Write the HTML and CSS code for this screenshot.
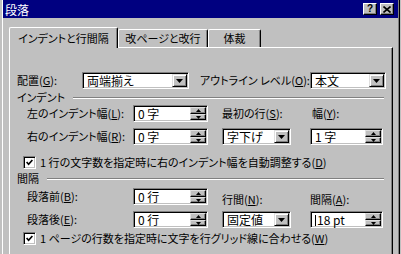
FILE: index.html
```html
<!DOCTYPE html>
<html lang="ja">
<head>
  <meta charset="UTF-8">
  <title>段落</title>
  <link rel="stylesheet" href="styles.css">
</head>
<body>
  <div class="window">
    <div class="titlebar">
      <span class="title">段落</span>
      <span class="caption-btns">
        <span class="cbtn help">?</span>
        <span class="cbtn">
          <svg width="8" height="7" viewBox="0 0 8 7"><path d="M0.5 0.5 L7.5 6.5 M7.5 0.5 L0.5 6.5" stroke="#000" stroke-width="1.6"/></svg>
        </span>
      </span>
    </div>

    <div class="tabs">
      <div class="tab active" style="width: 109px;">インデントと行間隔</div>
      <div class="tab" style="width: 90px;">改ページと改行</div>
      <div class="tab" style="width: 53px;">体裁</div>
    </div>

    <div class="panel">
      <!-- 配置 / アウトライン レベル -->
      <div class="row-top">
        <span class="lbl-align">配置(<u>G</u>):</span>
        <div class="combo w-align">
          <span class="value">両端揃え</span>
          <span class="arrow"><svg width="7" height="4" viewBox="0 0 7 4"><polygon points="0,0 7,0 3.5,4" fill="#000"/></svg></span>
        </div>
        <span class="lbl-outline">アウトライン レベル(<u>O</u>):</span>
        <div class="combo w-outline">
          <span class="value">本文</span>
          <span class="arrow"><svg width="7" height="4" viewBox="0 0 7 4"><polygon points="0,0 7,0 3.5,4" fill="#000"/></svg></span>
        </div>
      </div>

      <!-- インデント -->
      <div class="group-head">
        <span>インデント</span>
        <span class="etch"></span>
      </div>
      <div class="fields">
        <span>左のインデント幅(<u>L</u>):</span>
        <div class="spin w-left">
          <span class="value">0 字</span>
          <span class="spin-btns">
            <span class="sbtn up"><svg width="5" height="3" viewBox="0 0 5 3"><polygon points="2.5,0 5,3 0,3" fill="#000"/></svg></span>
            <span class="sbtn"><svg width="5" height="3" viewBox="0 0 5 3"><polygon points="0,0 5,0 2.5,3" fill="#000"/></svg></span>
          </span>
        </div>
        <span>最初の行(<u>S</u>):</span>
        <span class="lbl-shift">幅(<u>Y</u>):</span>

        <span>右のインデント幅(<u>R</u>):</span>
        <div class="spin w-left">
          <span class="value">0 字</span>
          <span class="spin-btns">
            <span class="sbtn up"><svg width="5" height="3" viewBox="0 0 5 3"><polygon points="2.5,0 5,3 0,3" fill="#000"/></svg></span>
            <span class="sbtn"><svg width="5" height="3" viewBox="0 0 5 3"><polygon points="0,0 5,0 2.5,3" fill="#000"/></svg></span>
          </span>
        </div>
        <div class="combo w-mid">
          <span class="value">字下げ</span>
          <span class="arrow"><svg width="7" height="4" viewBox="0 0 7 4"><polygon points="0,0 7,0 3.5,4" fill="#000"/></svg></span>
        </div>
        <div class="spin w-right">
          <span class="value">1 字</span>
          <span class="spin-btns">
            <span class="sbtn up"><svg width="5" height="3" viewBox="0 0 5 3"><polygon points="2.5,0 5,3 0,3" fill="#000"/></svg></span>
            <span class="sbtn"><svg width="5" height="3" viewBox="0 0 5 3"><polygon points="0,0 5,0 2.5,3" fill="#000"/></svg></span>
          </span>
        </div>
      </div>

      <div class="check-row first">
        <span class="check"><svg width="7" height="7" viewBox="0 0 7 7"><polyline points="0.6,3 2.6,5.2 6.4,1" fill="none" stroke="#000" stroke-width="1.7"/></svg></span>
        <span>1 行の文字数を指定時に右のインデント幅を自動調整する(<u>D</u>)</span>
      </div>

      <!-- 間隔 -->
      <div class="group-head second">
        <span>間隔</span>
        <span class="etch"></span>
      </div>
      <div class="fields spacing">
        <span>段落前(<u>B</u>):</span>
        <div class="spin w-left">
          <span class="value">0 行</span>
          <span class="spin-btns">
            <span class="sbtn up"><svg width="5" height="3" viewBox="0 0 5 3"><polygon points="2.5,0 5,3 0,3" fill="#000"/></svg></span>
            <span class="sbtn"><svg width="5" height="3" viewBox="0 0 5 3"><polygon points="0,0 5,0 2.5,3" fill="#000"/></svg></span>
          </span>
        </div>
        <span class="lbl-low">行間(<u>N</u>):</span>
        <span class="lbl-low">間隔(<u>A</u>):</span>

        <span>段落後(<u>E</u>):</span>
        <div class="spin w-left">
          <span class="value">0 行</span>
          <span class="spin-btns">
            <span class="sbtn up"><svg width="5" height="3" viewBox="0 0 5 3"><polygon points="2.5,0 5,3 0,3" fill="#000"/></svg></span>
            <span class="sbtn"><svg width="5" height="3" viewBox="0 0 5 3"><polygon points="0,0 5,0 2.5,3" fill="#000"/></svg></span>
          </span>
        </div>
        <div class="combo w-mid">
          <span class="value">固定値</span>
          <span class="arrow"><svg width="7" height="4" viewBox="0 0 7 4"><polygon points="0,0 7,0 3.5,4" fill="#000"/></svg></span>
        </div>
        <div class="spin w-right">
          <span class="value"><span class="caret"></span>18 pt</span>
          <span class="spin-btns">
            <span class="sbtn up"><svg width="5" height="3" viewBox="0 0 5 3"><polygon points="2.5,0 5,3 0,3" fill="#000"/></svg></span>
            <span class="sbtn"><svg width="5" height="3" viewBox="0 0 5 3"><polygon points="0,0 5,0 2.5,3" fill="#000"/></svg></span>
          </span>
        </div>
      </div>

      <div class="check-row last">
        <span class="check"><svg width="7" height="7" viewBox="0 0 7 7"><polyline points="0.6,3 2.6,5.2 6.4,1" fill="none" stroke="#000" stroke-width="1.7"/></svg></span>
        <span>1 ページの行数を指定時に文字を行グリッド線に合わせる(<u>W</u>)</span>
      </div>
    </div>
  </div>
</body>
</html>
```

FILE: styles.css
```css
body {
  margin: 0;
  background-color: #c0c0c0;
  font-family: "Noto Sans CJK JP", "Noto Sans", sans-serif;
  font-size: 11px;
  line-height: 13px;
  color: #000;
  font-feature-settings: "palt";
}

u {
  text-decoration: underline;
  text-underline-offset: 1px;
}

.window {
  width: 401px;
  height: 254px;
  box-sizing: border-box;
  padding: 0 3px;
  overflow: hidden;
  background-color: #c0c0c0;
  /* рамка окна */
  box-shadow: inset 2px 0 #c0c0c0, inset 3px 0 #fff,
    inset -1px 0 #c0c0c0, inset -2px 0 #000, inset -3px 0 #808080;
}

.titlebar {
  height: 18px;
  display: flex;
  align-items: center;
  padding: 0 4px 0 2px;
  background-color: #000080;
  color: #fff;
}

.title {
  font-size: 12px;
}

.caption-btns {
  margin-left: auto;
  display: flex;
  gap: 3px;
}

.cbtn {
  width: 14px;
  height: 12px;
  box-sizing: border-box;
  display: flex;
  align-items: center;
  justify-content: center;
  background-color: #c0c0c0;
  border: 1px solid;
  border-color: #fff #000 #000 #fff;
  box-shadow: inset -1px -1px #808080;
}

.help {
  font-family: "Liberation Sans", Arial, sans-serif;
  font-weight: bold;
  font-size: 10px;
  color: #000;
  line-height: 10px;
}

/* вкладки */
.tabs {
  height: 20px;
  margin: 9px 0 0 6px;
  display: flex;
  align-items: flex-end;
}

.tab {
  height: 18px;
  box-sizing: border-box;
  display: flex;
  align-items: center;
  justify-content: center;
  white-space: nowrap;
  border-top: 1px solid #fff;
  border-left: 1px solid #fff;
  border-right: 1px solid #000;
  border-top-left-radius: 2px;
  border-top-right-radius: 2px;
  box-shadow: inset -1px 0 #808080;
}

.tab.active {
  height: 21px;
  margin-bottom: -1px;
  position: relative;
  z-index: 1;
  background-color: #c0c0c0;
}

.panel {
  width: 384px;
  height: 220px;
  box-sizing: border-box;
  margin-left: 6px;
  padding-top: 24px;
  border-top: 1px solid #fff;
  border-left: 1px solid #fff;
  border-right: 1px solid #000;
  box-shadow: inset -1px 0 #808080;
}

.row-top {
  height: 17px;
  display: flex;
  align-items: center;
  padding-left: 7px;
  white-space: nowrap;
}

.lbl-align {
  width: 65px;
}

.lbl-outline {
  width: 110px;
  margin-left: 11px;
}

.w-align { width: 107px; }
.w-outline { width: 76px; }
.w-left { width: 75px; }
.w-mid { width: 69px; }
.w-right { width: 73px; }

.combo, .spin {
  height: 17px;
  box-sizing: border-box;
  display: flex;
  padding: 1px;
  background-color: #fff;
  border: 1px solid;
  border-color: #808080 #fff #fff #808080;
  box-shadow: inset 1px 1px #000, inset -1px -1px #c0c0c0;
}

.value {
  flex: 1;
  padding-left: 3px;
  line-height: 13px;
  font-size: 12px;
  white-space: nowrap;
}

.arrow {
  width: 15px;
  height: 13px;
  box-sizing: border-box;
  display: flex;
  align-items: center;
  justify-content: center;
  background-color: #c0c0c0;
  border: 1px solid;
  border-color: #dfdfdf #000 #000 #dfdfdf;
  box-shadow: inset 1px 1px #fff, inset -1px -1px #808080;
}

.spin-btns {
  width: 16px;
  display: flex;
  flex-direction: column;
}

.sbtn {
  height: 6px;
  box-sizing: border-box;
  display: flex;
  align-items: center;
  justify-content: center;
  background-color: #c0c0c0;
  border: 1px solid;
  border-color: #dfdfdf #000 #000 #dfdfdf;
  box-shadow: inset -1px -1px #808080;
}

.sbtn.up {
  height: 7px;
}

.caret {
  display: inline-block;
  width: 1px;
  height: 11px;
  margin-right: 1px;
  background-color: #000;
  vertical-align: -1px;
}

.group-head {
  height: 13px;
  margin-top: 2px;
  display: flex;
  align-items: center;
  padding: 0 8px 0 7px;
  white-space: nowrap;
}

.group-head.second {
  margin-top: 3px;
}

.etch {
  flex: 1;
  margin-left: 8px;
  border-top: 1px solid #808080;
  border-bottom: 1px solid #fff;
}

.fields {
  margin-top: 1px;
  padding-left: 17px;
  display: grid;
  grid-template-columns: 106px 89px 88px 73px;
  grid-template-rows: 17px 17px;
  row-gap: 6px;
  align-items: center;
  white-space: nowrap;
}

.fields.spacing {
  margin-top: 3px;
}

.lbl-shift {
  padding-left: 2px;
}

.lbl-low {
  padding-top: 5px;
}

.check-row {
  height: 13px;
  display: flex;
  align-items: center;
  gap: 4px;
  padding-left: 13px;
  white-space: nowrap;
}

.check-row.first {
  margin-top: 11px;
}

.check-row.last {
  margin-top: 4px;
}

.check {
  width: 13px;
  height: 13px;
  box-sizing: border-box;
  display: flex;
  align-items: center;
  justify-content: center;
  background-color: #fff;
  border: 1px solid;
  border-color: #808080 #fff #fff #808080;
  box-shadow: inset 1px 1px #000, inset -1px -1px #c0c0c0;
}
```
